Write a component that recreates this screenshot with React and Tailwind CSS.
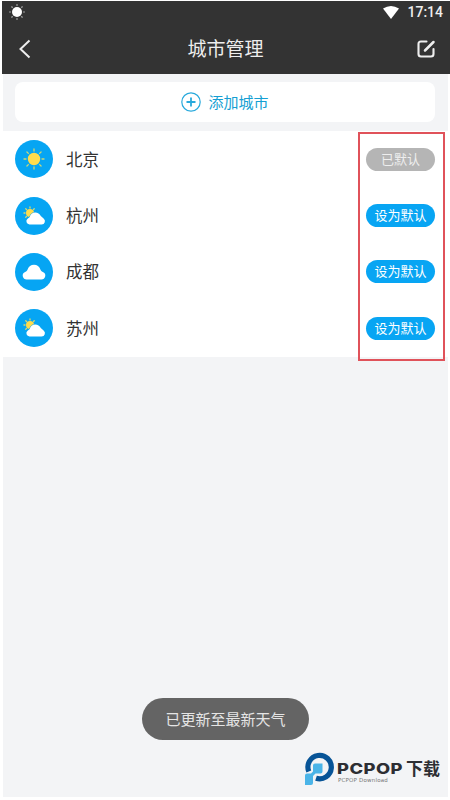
const cities = [
  { name: '北京', weather: 'sun', isDefault: true },
  { name: '杭州', weather: 'partly' },
  { name: '成都', weather: 'cloud' },
  { name: '苏州', weather: 'partly' },
]

const rays = [0, 45, 90, 135, 180, 225, 270, 315]

function StatusSun() {
  return (
    <svg className="h-4 w-4" viewBox="0 0 16 16">
      <circle cx="8" cy="8" r="5" fill="#fff" />
      {rays.map((deg) => (
        <path key={deg} d="M8 0.2V1.8" stroke="#bbb" strokeWidth="1.2" transform={`rotate(${deg} 8 8)`} />
      ))}
    </svg>
  )
}

function WeatherIcon({ type }) {
  return (
    <svg className="h-[38px] w-[38px] shrink-0" viewBox="0 0 38 38">
      <circle cx="19" cy="19" r="19" fill="#06a5f3" />
      {type === 'sun' && (
        <g>
          <circle cx="19" cy="19" r="6.2" fill="#ffdc4d" />
          {rays.map((deg) => (
            <path
              key={deg}
              d="M19 9V11"
              stroke="#c8d67a"
              strokeWidth="1.3"
              strokeLinecap="round"
              transform={`rotate(${deg} 19 19)`}
            />
          ))}
        </g>
      )}
      {type === 'partly' && (
        <g>
          <circle cx="15" cy="16" r="4" fill="#ffdc4d" />
          {[-135, -90, -45, 0, 45].map((deg) => (
            <path
              key={deg}
              d="M15 10V11"
              stroke="#d8d86e"
              strokeWidth="1.3"
              strokeLinecap="round"
              transform={`rotate(${deg} 15 16)`}
            />
          ))}
          <path
            d="M14.500 27.500A3.200 3.200 0 0 1 12.600 21.800L14.800 20C15.400 17 17.500 15.400 20.200 15.400C22.800 15.400 24.600 16.800 25.800 19L28.600 21.400A3.400 3.400 0 0 1 26.600 27.500Z"
            fill="#fff"
            stroke="#06a5f3"
            strokeWidth="1"
            paintOrder="stroke"
          />
        </g>
      )}
      {type === 'cloud' && (
        <path
          d="M11.600 26.500A3.900 3.900 0 0 1 9.700 19.200C11 18.500 12 18.200 12.600 16.500C13.500 13.400 16 11.700 19 11.700S24.500 13.400 25.400 16.500C26 18.200 27 18.500 28.300 19.200A3.900 3.900 0 0 1 26.400 26.500Z"
          fill="#fff"
        />
      )}
    </svg>
  )
}

function CityRow({ city }) {
  return (
    <div className="flex h-[56.4px] items-center pr-[13px] pl-3">
      <WeatherIcon type={city.weather} />
      <span className="mt-[3px] ml-[13px] flex-1 text-[16.5px] leading-6 text-[#333]">{city.name}</span>
      <button
        className={`h-[23px] w-[69px] rounded-full text-[13px] leading-[23px] ${
          city.isDefault ? 'bg-[#b5b5b5] text-[#eee]' : 'bg-[#08a5f3] text-white'
        }`}
      >
        {city.isDefault ? '已默认' : '设为默认'}
      </button>
    </div>
  )
}

function Watermark() {
  return (
    <div className="absolute top-[752px] left-[305px] flex">
      <svg className="h-[34px] w-[30px]" viewBox="0 0 30 34">
        <path d="M3.800 19.500A11.700 11.700 0 1 1 11 26.200" fill="none" stroke="#075497" strokeWidth="5.200" />
        <path d="M10 11.500H17.500V19.500Q17.500 21.500 15.500 21.500H10.500L8 24V31Q8 33 6 33H0V23.500Q0 21.500 2 21.500H6L8 19.500V13.500Q8 11.500 10 11.500Z" fill="#4ab4e8" />
      </svg>
      <div className="ml-[2px] pt-[10px] text-[#2d2e33]">
        <div className="flex h-[14px] items-center leading-[14px]">
          <span className="w-[69px]">
            <span className="inline-block origin-left scale-x-[1.220] font-['Inter'] text-[15px] font-extrabold tracking-[0.400px]">
              PCPOP
            </span>
          </span>
          <span className="text-[17px] font-bold">下载</span>
        </div>
        <div className="pt-px pl-px font-['DejaVu_Sans'] text-[5.500px] leading-[6px] tracking-[0.200px] text-[#777]">PCPOP Download</div>
      </div>
    </div>
  )
}

export default function App() {
  return (
    <div className="relative h-[800px] w-[450px] overflow-hidden bg-white pt-px font-['Roboto','Noto_Sans_CJK_SC',sans-serif]">
      <header className="ml-[2px] h-[73px] bg-[#333] text-white">
        <div className="flex h-[22px] items-center justify-between px-[7px]">
          <StatusSun />
          <div className="flex items-center gap-2">
            <svg className="h-[13px] w-4" viewBox="0 0 16 13">
              <path d="M0 2.500Q8-2.500 16 2.500L8 13Z" fill="#fff" />
            </svg>
            <span className="text-[14px] leading-4 font-medium text-[#eee]">17:14</span>
          </div>
        </div>
        <div className="flex h-[51px] items-center justify-between pr-3.5 pl-4">
          <svg className="h-5 w-5" viewBox="0 0 20 20" fill="none" stroke="#eee" strokeWidth="2">
            <path d="M11.500 1.500L2.500 10L11.500 18.500" />
          </svg>
          <h1 className="mt-[3px] mr-[3px] text-[19px] leading-6 font-normal text-[#eee]">城市管理</h1>
          <svg
            className="h-5 w-5"
            viewBox="0 0 20 20"
            fill="none"
            stroke="#eee"
            strokeWidth="2.100"
            strokeLinecap="round"
            strokeLinejoin="round"
          >
            <path d="M10.500 2.500H5Q2.500 2.500 2.500 5V15Q2.500 17.500 5 17.500H15Q17.500 17.500 17.500 15V10" />
            <path d="M9 11.500L17.500 3" strokeWidth="2.500" />
          </svg>
        </div>
      </header>

      <main className="mr-[2px] ml-[3px] h-[723px] bg-[#f3f4f6] pt-2">
        <button className="mr-[13px] ml-3 flex h-10 w-[420px] items-center justify-center gap-[7px] rounded-lg bg-white text-[15px] text-[#159fd3]">
          <svg className="h-5 w-5" viewBox="0 0 20 20" fill="none" stroke="#28a9dc">
            <circle cx="10" cy="10" r="9.200" strokeWidth="1.200" />
            <path d="M10 5.500V14.500M5.500 10H14.500" strokeWidth="1.800" />
          </svg>
          <span className="mt-[2px]">添加城市</span>
        </button>
        <section className="mt-[9px] bg-white">
          {cities.map((city) => (
            <CityRow key={city.name} city={city} />
          ))}
        </section>
      </main>

      <div className="absolute top-[132px] left-[358px] h-[229px] w-[87px] border-2 border-[#e0525a]" />
      <div className="absolute top-[698px] left-[142px] flex h-[42px] w-[167px] items-center justify-center rounded-full bg-[#646464] pt-[2px] text-[15px] text-[#e5e5e5]">
        已更新至最新天气
      </div>
      <Watermark />
    </div>
  )
}
